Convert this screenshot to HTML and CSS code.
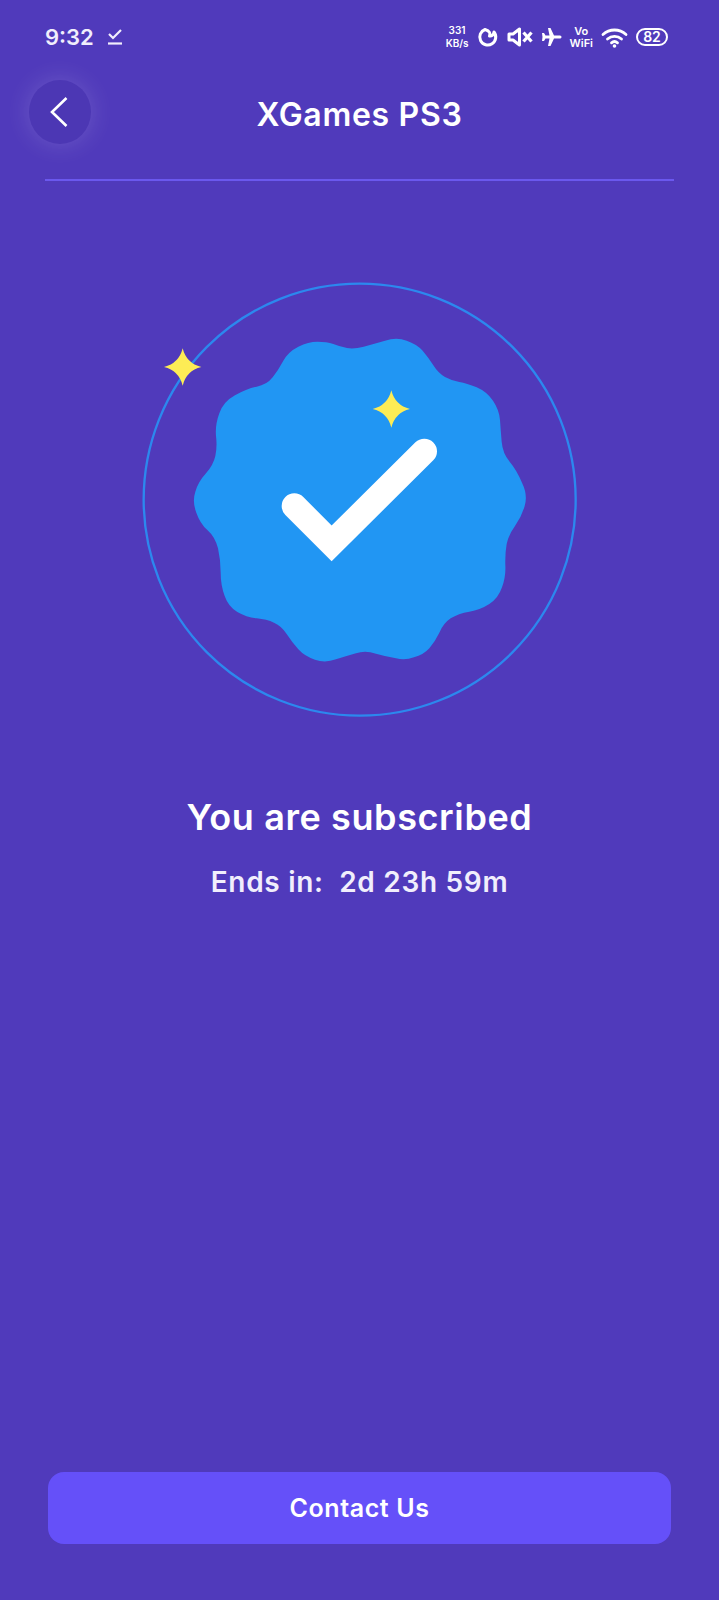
FILE: index.html
```html
<!DOCTYPE html>
<html lang="en">
<head>
    <meta charset="UTF-8">
    <title>XGames PS3</title>
    <meta name="viewport" content="width=device-width, initial-scale=1">
    <link rel="stylesheet" href="styles.css">
</head>
<body>
    <div class="screen">
        <div class="status-bar">
            <div class="status-left">
                <span class="clock">9:32</span>
                <svg class="icon-task" width="16" height="18" viewBox="0 0 16 18">
                    <path d="M2 6l4 4 8-8" fill="none" stroke="#f1eefc" stroke-width="2.200"/>
                    <path d="M1 15.500h14" fill="none" stroke="#f1eefc" stroke-width="2.200"/>
                </svg>
            </div>
            <div class="status-right">
                <div class="speed"><span>331</span><span>KB/s</span></div>
                <svg width="22" height="22" viewBox="0 0 22 22">
                    <path d="M8 3.500a8 8 0 1 0 9 2.500c-.5 3-2.500 4.500-4.500 4 1-2.500.5-5-4.500-6.500z" fill="none" stroke="#fff" stroke-width="3" stroke-linejoin="round"/>
                </svg>
                <svg width="26" height="20" viewBox="0 0 26 20">
                    <path d="M2 7h4l6.500-5v16L6 13H2z" fill="none" stroke="#fff" stroke-width="3" stroke-linejoin="round"/>
                    <path d="M16.500 5.500l8 9M24.500 5.500l-8 9" fill="none" stroke="#fff" stroke-width="3.200"/>
                </svg>
                <svg width="21" height="20" viewBox="0 0 21 20">
                    <path d="M20.500 10c0 1-1 1.500-2 1.500H13L9.500 19H7l1.500-7.500H4.500L3 14H1l.5-4L1 6h2l1.500 2.500h4L7 1h2.500L13 8.500h5.500c1 0 2 .5 2 1.500z" fill="#fff"/>
                </svg>
                <div class="vowifi"><span>Vo</span><span>WiFi</span></div>
                <svg width="27" height="22" viewBox="0 0 27 22">
                    <path d="M2 8.500c6.500-6 16.500-6 23 0M6.500 13c4-3.600 10-3.600 14 0M10.500 16.800c1.800-1.500 4.200-1.500 6 0" fill="none" stroke="#fff" stroke-width="2.800" stroke-linecap="round"/>
                    <circle cx="13.500" cy="20" r="1.800" fill="#fff"/>
                </svg>
                <div class="battery">82</div>
            </div>
        </div>

        <div class="top-bar">
            <button class="back-btn" type="button" aria-label="Back">
                <svg width="20" height="32" viewBox="0 0 20 32">
                    <path d="M16.500 2L2 16 16.500 30" fill="none" stroke="#fff" stroke-width="2.600"/>
                </svg>
            </button>
            <h1 class="title">XGames PS3</h1>
        </div>
        <div class="divider"></div>

        <div class="hero">
            <!-- viewBox is 3x the drawn size -->
            <svg class="badge" width="460" height="460" viewBox="0 0 1380 1380">
                <circle cx="689" cy="689" r="648" fill="none" stroke="#2c88ee" stroke-width="7"/>
                <path fill="#2196f3" d="M651 234Q672 238 701 230Q730 222 765 212Q800 201 830 212Q860 222 878 242Q895 262 910 286Q925 310 945 321Q965 332 988 336Q1010 340 1040 352Q1070 365 1089 392Q1108 420 1110 450Q1112 480 1115 515Q1118 550 1139 575Q1160 600 1176 638Q1194 675 1184 708Q1175 740 1155 768Q1135 795 1130 822Q1125 850 1126 885Q1128 920 1116 952Q1105 985 1078 1002Q1050 1020 1018 1025Q985 1030 962 1045Q940 1060 928 1088Q915 1115 898 1135Q880 1155 852 1162Q825 1172 798 1165Q770 1160 738 1151Q705 1140 678 1150Q650 1158 618 1168Q585 1180 555 1169Q525 1160 505 1138Q485 1115 470 1092Q455 1068 432 1058Q410 1048 380 1045Q350 1042 322 1026Q295 1010 284 978Q272 945 272 908Q272 870 264 835Q255 800 232 780Q210 760 199 728Q186 695 196 665Q205 635 228 610Q250 585 256 558Q262 530 258 498Q255 465 268 430Q280 395 315 376Q350 356 380 350Q410 345 428 322Q445 300 460 272Q475 245 505 230Q535 215 562 215Q590 215 610 222Q630 230 651 234Z"/>
                <path d="M493 708L605 820L883 544" fill="none" stroke="#fff" stroke-width="76" stroke-linecap="round" stroke-linejoin="miter"/>
                <path fill="#fdec55" d="M158 235Q169 280 214 291Q169 302 158 347Q147 302 102 291Q147 280 158 235Z"/>
                <path fill="#fdec55" d="M784 361Q795 406 840 417Q795 428 784 473Q773 428 728 417Q773 406 784 361Z"/>
            </svg>
        </div>

        <h2 class="heading">You are subscribed</h2>
        <div class="ends">Ends in:&nbsp; 2d 23h 59m</div>

        <div class="spacer"></div>
        <button class="contact-btn" type="button">Contact Us</button>
    </div>
</body>
</html>
```

FILE: styles.css
```css
body {
    margin: 0;
    padding: 0;
    background: #503abb;
    font-family: 'Inter', 'Liberation Sans', sans-serif;
    color: #fff;
}
.screen {
    height: 1600px;
    display: flex;
    flex-direction: column;
    overflow: hidden;
}
.status-bar {
    height: 74px;
    padding: 0 51px 0 45px;
    display: flex;
    justify-content: space-between;
    align-items: center;
    box-sizing: border-box;
}
.status-left {
    display: flex;
    align-items: center;
    gap: 13px;
}
.clock {
    font-size: 22px;
    font-weight: 600;
    color: #f1eefc;
}
.status-right {
    display: flex;
    align-items: center;
    gap: 8px;
}
.speed, .vowifi {
    display: flex;
    flex-direction: column;
    align-items: center;
    color: #fff;
    font-weight: 600;
}
.speed {
    font-size: 10px;
    line-height: 13px;
}
.vowifi {
    font-size: 11px;
    line-height: 12px;
}
.battery {
    width: 28px;
    height: 14px;
    border: 2.500px solid #fff;
    border-radius: 10px;
    font-size: 14px;
    line-height: 14px;
    font-weight: 600;
    text-align: center;
}
.top-bar {
    display: grid;
    grid-template-columns: 62px 1fr 62px;
    align-items: center;
    padding: 6px 29px 0 29px;
}
.back-btn {
    width: 62px;
    height: 64px;
    padding: 0;
    border: none;
    border-radius: 50%;
    background: #4c37b4;
    box-shadow: 0 0 26px rgba(255,255,255,0.16);
    display: flex;
    align-items: center;
    justify-content: center;
}
.title {
    margin: 0;
    padding-top: 4px;
    text-align: center;
    font-size: 32px;
    font-weight: 600;
    letter-spacing: 0.7px;
}
.divider {
    height: 2px;
    margin: 35px 45px 0 45px;
    background: #6b58ee;
}
.hero {
    display: flex;
    justify-content: center;
    margin-top: 89px;
}
.badge {
    display: block;
}
.heading {
    margin: 65px 0 0 0;
    text-align: center;
    font-size: 36px;
    font-weight: 600;
    line-height: 44px;
    letter-spacing: 0.6px;
}
.ends {
    margin-top: 26px;
    text-align: center;
    font-size: 28px;
    font-weight: 600;
    line-height: 34px;
    letter-spacing: 0.7px;
    color: #f1eefc;
}
.spacer {
    flex: 1;
}
.contact-btn {
    height: 72px;
    margin: 0 48px 56px 48px;
    border: none;
    border-radius: 16px;
    background: #6550f9;
    color: #fff;
    font-family: inherit;
    font-size: 25px;
    font-weight: 600;
    letter-spacing: 0.6px;
}
```
